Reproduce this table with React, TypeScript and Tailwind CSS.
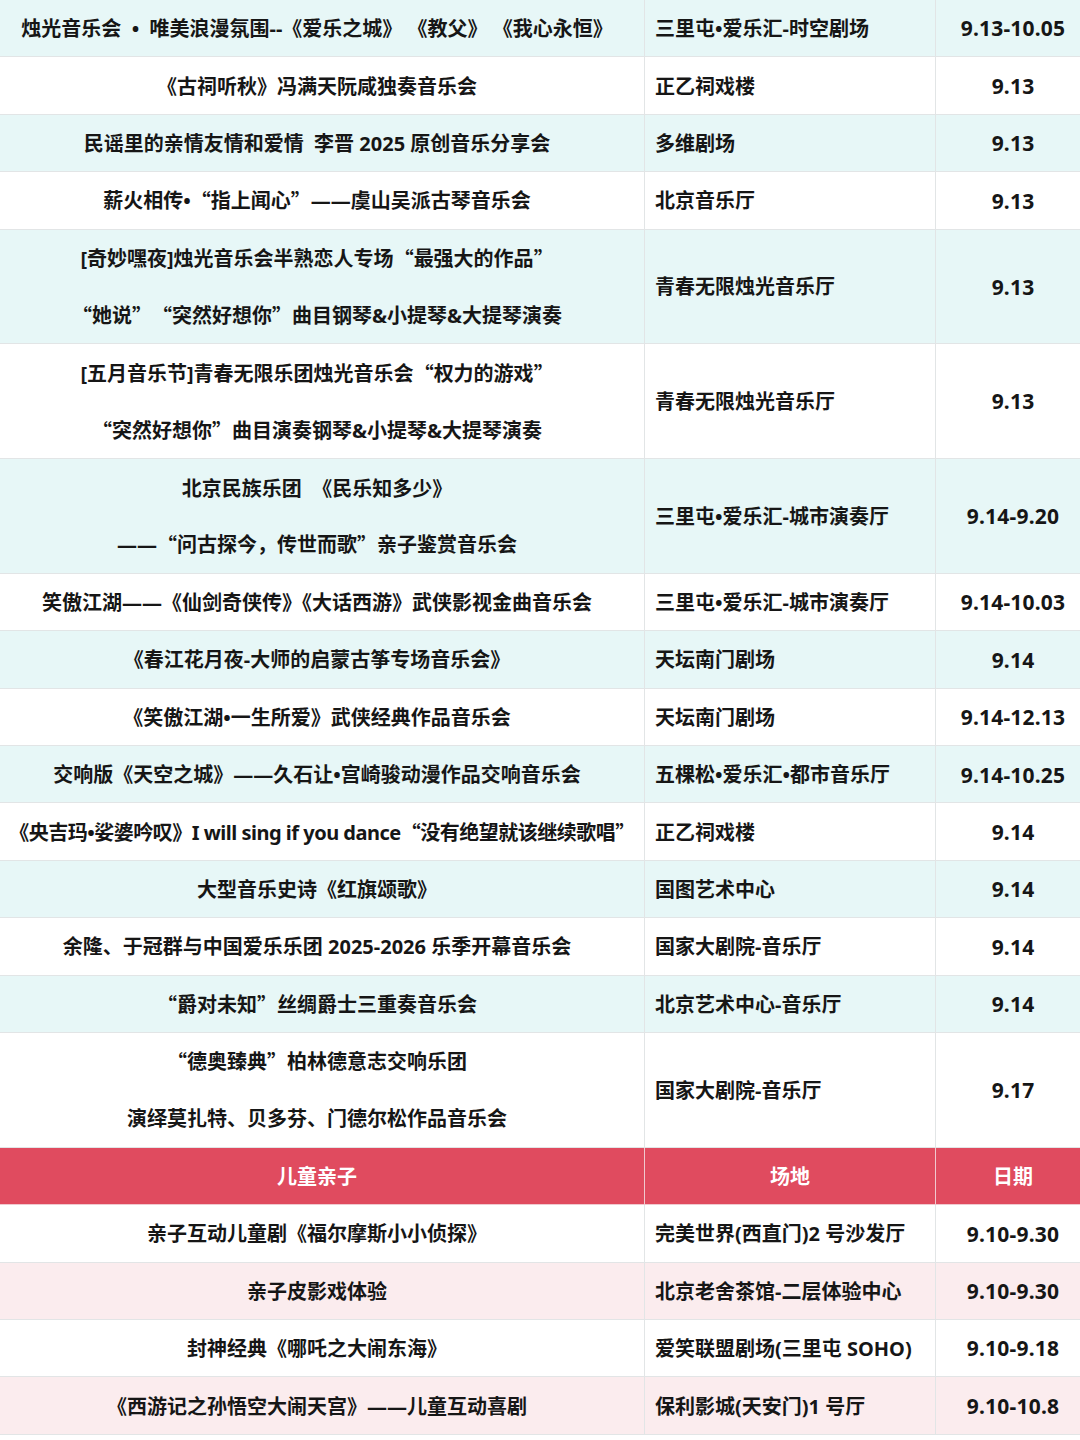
import React from "react";

type Row = { t: string[]; v: string; d: string; tight?: boolean };

const rows: Row[] = [
  { t: ["烛光音乐会  •  唯美浪漫氛围--《爱乐之城》 《教父》 《我心永恒》"], v: "三里屯•爱乐汇-时空剧场", d: "9.13-10.05" },
  { t: ["《古祠听秋》冯满天阮咸独奏音乐会"], v: "正乙祠戏楼", d: "9.13" },
  { t: ["民谣里的亲情友情和爱情  李晋 2025 原创音乐分享会"], v: "多维剧场", d: "9.13" },
  { t: ["薪火相传•“指上闻心”——虞山吴派古琴音乐会"], v: "北京音乐厅", d: "9.13" },
  {
    t: ["[奇妙嘿夜]烛光音乐会半熟恋人专场“最强大的作品”", "“她说” “突然好想你”曲目钢琴&小提琴&大提琴演奏"],
    v: "青春无限烛光音乐厅",
    d: "9.13",
  },
  {
    t: ["[五月音乐节]青春无限乐团烛光音乐会“权力的游戏”", "“突然好想你”曲目演奏钢琴&小提琴&大提琴演奏"],
    v: "青春无限烛光音乐厅",
    d: "9.13",
  },
  {
    t: ["北京民族乐团  《民乐知多少》", "——“问古探今，传世而歌”亲子鉴赏音乐会"],
    v: "三里屯•爱乐汇-城市演奏厅",
    d: "9.14-9.20",
  },
  { t: ["笑傲江湖——《仙剑奇侠传》《大话西游》武侠影视金曲音乐会"], v: "三里屯•爱乐汇-城市演奏厅", d: "9.14-10.03" },
  { t: ["《春江花月夜-大师的启蒙古筝专场音乐会》"], v: "天坛南门剧场", d: "9.14" },
  { t: ["《笑傲江湖•一生所爱》武侠经典作品音乐会"], v: "天坛南门剧场", d: "9.14-12.13" },
  { t: ["交响版《天空之城》——久石让•宫崎骏动漫作品交响音乐会"], v: "五棵松•爱乐汇•都市音乐厅", d: "9.14-10.25" },
  {
    t: ["《央吉玛•娑婆吟叹》I will sing if you dance“没有绝望就该继续歌唱”"],
    v: "正乙祠戏楼",
    d: "9.14",
    tight: true,
  },
  { t: ["大型音乐史诗《红旗颂歌》"], v: "国图艺术中心", d: "9.14" },
  { t: ["余隆、于冠群与中国爱乐乐团 2025-2026 乐季开幕音乐会"], v: "国家大剧院-音乐厅", d: "9.14" },
  { t: ["“爵对未知”丝绸爵士三重奏音乐会"], v: "北京艺术中心-音乐厅", d: "9.14" },
  {
    t: ["“德奥臻典”柏林德意志交响乐团", "演绎莫扎特、贝多芬、门德尔松作品音乐会"],
    v: "国家大剧院-音乐厅",
    d: "9.17",
  },
];

const kids: Row[] = [
  { t: ["亲子互动儿童剧《福尔摩斯小小侦探》"], v: "完美世界(西直门)2 号沙发厅", d: "9.10-9.30" },
  { t: ["亲子皮影戏体验"], v: "北京老舍茶馆-二层体验中心", d: "9.10-9.30" },
  { t: ["封神经典《哪吒之大闹东海》"], v: "爱笑联盟剧场(三里屯 SOHO)", d: "9.10-9.18" },
  { t: ["《西游记之孙悟空大闹天宫》——儿童互动喜剧"], v: "保利影城(天安门)1 号厅", d: "9.10-10.8" },
];

const font = { fontFamily: '"Noto Sans", "Noto Sans CJK SC", sans-serif' };

function Txt({ s }: { s: string }) {
  const parts = s.split(/([“”])/);
  return (
    <>
      {parts.map((p, i) =>
        p === "“" || p === "”" ? (
          <span key={i} className="font-['Noto_Sans_CJK_SC',sans-serif]">
            {p}
          </span>
        ) : (
          <React.Fragment key={i}>{p}</React.Fragment>
        )
      )}
    </>
  );
}

function DataRow({ r, bg }: { r: Row; bg: string }) {
  const lineH = r.t.length > 1 ? "h-[56.9px]" : "h-[56.4px]";
  const pad = r.tight ? "pr-0 tracking-[-0.5px]" : "pr-[10px]";
  return (
    <>
      <div className={`${bg} border-r border-b border-[#e2e5e6] flex flex-col ${pad}`}>
        {r.t.map((line, i) => (
          <div key={i} className={`${lineH} flex items-center justify-center whitespace-pre pt-[2px]`}>
            <Txt s={line} />
          </div>
        ))}
      </div>
      <div className={`${bg} border-r border-b border-[#e2e5e6] flex items-center pl-[10px] pt-[2px] whitespace-pre`}>
        {r.v}
      </div>
      <div className={`${bg} border-b border-[#e2e5e6] flex items-center justify-center pl-[10px] pt-[2px] text-[21px] tracking-[0.2px]`}>
        {r.d}
      </div>
    </>
  );
}

export default function App() {
  return (
    <div className="w-[1080px] bg-white text-[#161616] font-bold text-[20px]" style={font}>
      <div className="grid grid-cols-[645px_291px_144px]">
        {rows.map((r, i) => (
          <DataRow key={i} r={r} bg={i % 2 === 0 ? "bg-[#e7f7f7]" : "bg-white"} />
        ))}
        <div className="bg-[#e04b5f] text-white h-[57.4px] flex items-center justify-center pr-[10px] pt-[2px] border-r border-b border-[#f0c9cf]">
          儿童亲子
        </div>
        <div className="bg-[#e04b5f] text-white h-[57.4px] flex items-center justify-center pt-[2px] border-r border-b border-[#f0c9cf]">
          场地
        </div>
        <div className="bg-[#e04b5f] text-white h-[57.4px] flex items-center justify-center pl-[10px] pt-[2px] border-b border-[#f0c9cf]">
          日期
        </div>
        {kids.map((r, i) => (
          <DataRow key={i} r={r} bg={i % 2 === 0 ? "bg-white" : "bg-[#fbecee]"} />
        ))}
      </div>
    </div>
  );
}
